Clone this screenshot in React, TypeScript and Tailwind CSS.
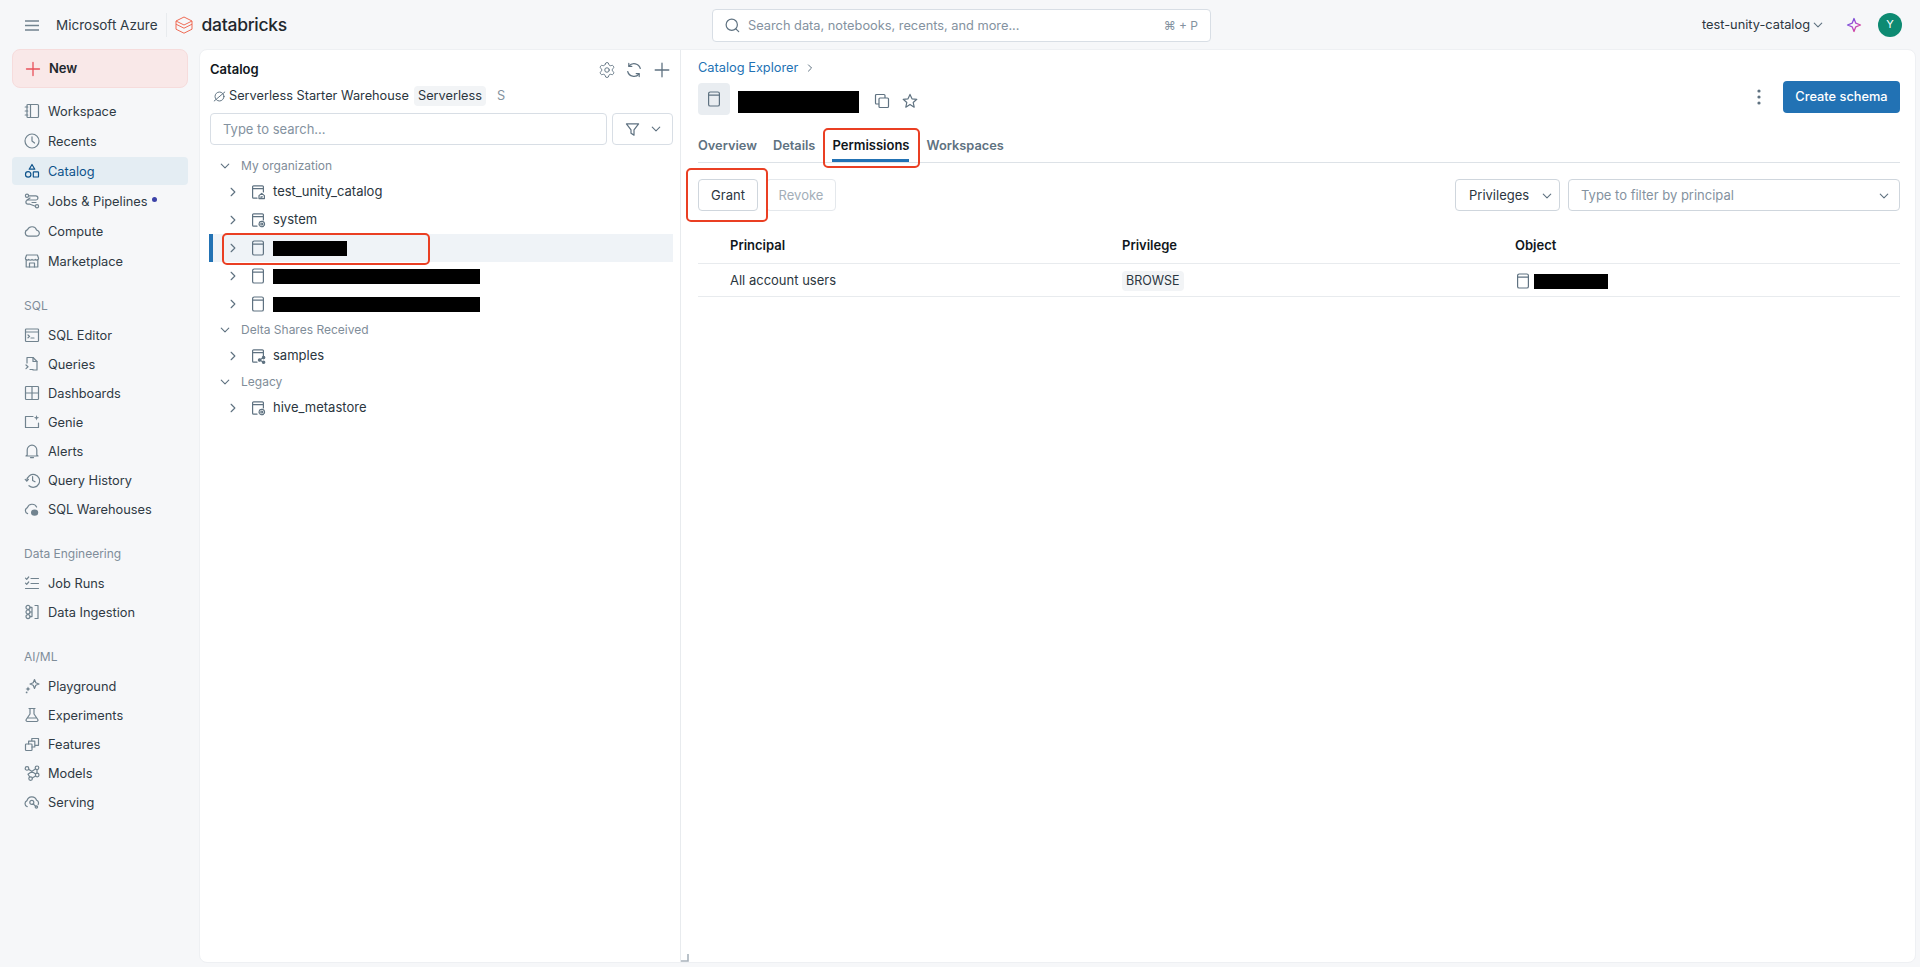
import React from "react";
import { Settings } from "lucide-react";

const S = ({ children, className = "w-4 h-4", sw = 1.2 }: { children: React.ReactNode; className?: string; sw?: number }) => (
  <svg viewBox="0 0 16 16" fill="none" stroke="currentColor" strokeWidth={sw} strokeLinecap="round" strokeLinejoin="round" className={className}>
    {children}
  </svg>
);

const navIcons: Record<string, React.ReactNode> = {
  Workspace: <><rect x="3" y="1.5" width="11.5" height="13" rx="1" /><path d="M6.5 1.5v13M1.2 4h2.6M1.2 8h2.6M1.2 12h2.6" /></>,
  Recents: <><circle cx="8" cy="8" r="7" /><path d="M8 3.8V8l2.6 2" /></>,
  Catalog: <><path d="M8 1.5l2.8 4.7H5.2z" /><circle cx="4.2" cy="11.4" r="2.7" /><rect x="9.3" y="8.8" width="5.2" height="5.2" rx=".6" /></>,
  "Jobs & Pipelines": <><circle cx="3" cy="2.8" r="1.6" /><circle cx="13" cy="13.2" r="1.6" /><path d="M4.6 2.8h7.2a2 2 0 0 1 0 4.2H4a2.1 2.1 0 0 0 0 4.2h2l5.4 2M6 5l-3 2M12 9.5H8" /></>,
  Compute: <path d="M4.4 13.2h7.6a3 3 0 0 0 .6-6A4.8 4.8 0 0 0 3.6 6.6a3.4 3.4 0 0 0 .8 6.6z" />,
  Marketplace: <><path d="M2.2 6.5V14h11.6V6.5" /><path d="M2.6 2h10.8l1.2 3.2a1.9 1.9 0 0 1-3.3 1.2A2.3 2.3 0 0 1 8 6.4a2.3 2.3 0 0 1-3.3 0 1.9 1.9 0 0 1-3.3-1.2zM5.5 14v-4h5v4" /></>,
  "SQL Editor": <><rect x="1.5" y="2" width="13" height="12.5" rx=".8" /><path d="M1.5 5h13M4 8l1.6 1.4L4 10.8M7 11h3" /></>,
  Queries: <><path d="M3 7V1.5h6l4 4V14H9" /><path d="M9 1.5v4h4M2 9l2 1.8L2 12.6M6 13.5h3" /></>,
  Dashboards: <><rect x="1.5" y="1.5" width="13" height="13" rx=".8" /><path d="M8 1.5v13M1.5 8h13" /></>,
  Genie: <><path d="M9 2.5H1.5v11h13V9" /><path d="M12.5 1l.7 2 2 .7-2 .7-.7 2-.7-2-2-.7 2-.7z" fill="currentColor" stroke="none" /></>,
  Alerts: <><path d="M3.2 12V7a4.8 4.8 0 0 1 9.6 0v5l1.2 1H2z" /><path d="M6.5 14.6h3" /></>,
  "Query History": <><path d="M1.2 7.4l1.6 1.6 1.6-1.6" /><path d="M2.8 8.6A6.4 6.4 0 1 1 5 13.7" /><path d="M8.6 4.6V8.4l2.4 1.4" /></>,
  "SQL Warehouses": <><path d="M3.6 12.6a3.2 3.2 0 0 1-.2-6A5 5 0 0 1 12.6 6" /><ellipse cx="10.6" cy="11.6" rx="3.6" ry="3.2" fill="currentColor" stroke="none" /></>,
  "Job Runs": <><path d="M1.5 3.2l1.2 1.2 2-2.4M1.5 8.2l1.2 1.2 2-2.4M7 3.5h7.5M7 8.5h7.5M1.5 13.5h13" /></>,
  "Data Ingestion": <><path d="M11 1.5h3v13h-3" /><circle cx="4" cy="3.4" r="2" /><circle cx="4" cy="8" r="2" /><circle cx="4" cy="12.6" r="2" /><path d="M6 3.4h2v9.2H6M8 8H6" /></>,
  Playground: <><path d="M10.5 1.5l1.3 3.2L15 6l-3.2 1.3L10.5 10.5 9.2 7.3 6 6l3.2-1.3z" /><path d="M4 8.5l.8 1.7 1.7.8-1.7.8L4 13.5l-.8-1.7-1.7-.8 1.7-.8z" fill="currentColor" stroke="none" /><circle cx="2.6" cy="14.4" r=".9" fill="currentColor" stroke="none" /></>,
  Experiments: <><path d="M5 1.5h6M6 1.5v5.5L2.2 12.5a1.3 1.3 0 0 0 1.1 2h9.4a1.3 1.3 0 0 0 1.1-2L10 7V1.5M3.6 11h8.8" /></>,
  Features: <><rect x="1.5" y="8" width="6.5" height="6.5" rx=".8" /><path d="M4.6 8V5.2h6.2V11H8M7.8 5.2V2.5h6.7v6.8h-3.7" /></>,
  Models: <><circle cx="3" cy="3.4" r="1.8" /><circle cx="13" cy="2.8" r="1.8" /><circle cx="13.2" cy="10" r="1.8" /><circle cx="6.6" cy="13.6" r="1.8" /><path d="M4.6 4.2l7 4.8M11.6 3.8L4 9.2l1.8 2.8M11.6 11l-3.4 2M13 4.6v3.6" /></>,
  Serving: <><path d="M3.2 12.6a3.2 3.2 0 0 1-.2-6 5 5 0 0 1 9.6-.4 3.2 3.2 0 0 1 1.6 4.4" /><circle cx="7.8" cy="8.4" r="2" /><path d="M9.2 9.8l3 3" /><circle cx="12.4" cy="13" r="1.2" /></>,
};

const NavRow = ({ label, active, dot }: { label: string; active?: boolean; dot?: boolean }) => (
  <div className={`h-7 mx-3 pl-3 flex items-center gap-2 rounded ${active ? "bg-[#e4edf3] text-[#0e538b]" : "text-[#2f3a44]"}`}>
    <span className={active ? "text-[#0e538b]" : "text-[#71838f]"}>
      <S>{navIcons[label]}</S>
    </span>
    <span className="text-[12.8px] pt-px">{label}</span>
    {dot && <span className="w-[5px] h-[5px] rounded-full bg-[#3c42a8] -ml-1 -mt-[3px]" />}
  </div>
);

const NavHead = ({ label }: { label: string }) => (
  <div className="mt-[21px] mb-[5px] h-5 pl-6 flex items-center text-[12px] text-[#7f8d99]">{label}</div>
);

const ChevR = () => <S className="w-3 h-3 text-[#5f7281]" sw={1.5}><path d="M5.5 3l5 5-5 5" /></S>;
const ChevD = ({ c = "text-[#5f7281]" }: { c?: string }) => <S className={`w-3 h-3 ${c}`} sw={1.5}><path d="M3 5.5l5 5 5-5" /></S>;

const Cat = ({ badge }: { badge?: "home" | "gear" | "share" }) => (
  <svg viewBox="0 0 16 16" fill="none" stroke="currentColor" strokeWidth="1.2" strokeLinecap="round" strokeLinejoin="round" className="w-4 h-4 text-[#5f7281]">
    {badge ? (
      <>
        <path d="M13.4 8V2.8a1 1 0 0 0-1-1H3.6a1 1 0 0 0-1 1v10.4a1 1 0 0 0 1 1H7M2.6 4.6h10.8" />
        {badge === "home" && <path d="M9 14.6v-3l2.7-2.2 2.7 2.2v3zM11 14.6v-1.8h1.4" />}
        {badge === "gear" && <><circle cx="11.8" cy="12" r="1" /><circle cx="11.8" cy="12" r="2.7" strokeDasharray="1.4 1" strokeWidth="1.3" /></>}
        {badge === "share" && <><circle cx="9.6" cy="12" r="1.2" fill="currentColor" /><circle cx="13.6" cy="9.6" r="1.2" fill="currentColor" /><circle cx="13.6" cy="14.2" r="1.2" fill="currentColor" /><path d="M9.6 12l4-2.4M9.6 12l4 2.2" /></>}
      </>
    ) : (
      <>
        <rect x="2.6" y="1" width="10.8" height="14" rx="1.6" />
        <path d="M2.6 4.2h10.8" />
      </>
    )}
  </svg>
);

const Section = ({ label }: { label: string }) => (
  <div className="h-6 pl-[10px] flex items-center gap-[10px] text-[12px] text-[#7f8d99]">
    <ChevD />
    <span>{label}</span>
  </div>
);

const TreeRow = ({ label, badge, redact, active }: { label?: string; badge?: "home" | "gear" | "share"; redact?: string; active?: boolean }) => (
  <div className={`h-7 pl-[14px] flex items-center border-l-4 ${active ? "border-[#2272b4] bg-[#eff3f7]" : "border-transparent"}`}>
    <ChevR />
    <span className="ml-[11px] mr-[7px]"><Cat badge={badge} /></span>
    {label ? <span className="text-[13px] text-[#2b3640]">{label}</span> : <div className={`h-[15px] bg-black ${redact}`} />}
  </div>
);

const Tab = ({ label, active }: { label: string; active?: boolean }) => (
  <div className={`h-8 pt-[3px] flex items-center border-b-[3px] font-semibold ${active ? "mx-px text-[13px] border-[#2272b4] text-[#11171c]" : "text-[12.8px] border-transparent text-[#5f7281]"}`}>
    {label}
  </div>
);

const RedBox = ({ className }: { className: string }) => (
  <div className={`absolute border-[2.5px] border-[#ea3f23] rounded-[5px] pointer-events-none ${className}`} />
);

export default function App() {
  return (
    <div className="relative w-full h-[967px] overflow-hidden bg-[#f6f7f9] font-['Inter','Noto_Sans',sans-serif] flex flex-col text-[#11171c]">
      {/* top bar */}
      <header className="h-[49px] shrink-0 flex items-center">
        <div className="w-[712px] shrink-0 flex items-center pl-[25px] pt-px">
          <svg viewBox="0 0 14 11" className="w-[14px] h-[11px] text-[#71838f]" fill="none" stroke="currentColor" strokeWidth="1.3"><path d="M0 1h14M0 5.5h14M0 10h14" /></svg>
          <span className="ml-[17px] text-[13.5px] text-[#2f3a44]">Microsoft Azure</span>
          <span className="ml-2 w-px h-6 bg-[#e8ebee]" />
          <svg viewBox="0 0 18 18" className="ml-2 w-[18px] h-[18px] text-[#ef6b55]" fill="none" stroke="currentColor" strokeWidth="1" strokeLinejoin="round">
            <path d="M9 1L17 5 9 9 1 5z" />
            <path d="M1 8.2l8 4 8-4" />
            <path d="M1 5v8.2l8 4 8-4V5" />
          </svg>
          <span className="ml-[9px] text-[17.5px] font-medium tracking-[-0.3px] text-[#1f272d]">databricks</span>
        </div>
        <div className="w-[499px] h-[33px] mt-[2px] shrink-0 bg-white border border-[#d8dee5] rounded flex items-center pl-3 pr-3">
          <S className="w-[15px] h-[15px] text-[#5f7281]" sw={1.3}><circle cx="7.2" cy="7.2" r="6" /><path d="M11.6 11.6l3 3" /></S>
          <span className="ml-2 text-[12.8px] text-[#8492a0]">Search data, notebooks, recents, and more...</span>
          <span className="ml-auto text-[12px] text-[#8492a0]">⌘ + P</span>
        </div>
        <div className="flex-1 flex items-center justify-end pr-[18px]">
          <span className="text-[12.8px] text-[#2b3640]">test-unity-catalog</span>
          <span className="ml-[2px]"><ChevD /></span>
          <svg viewBox="0 0 16 16" className="ml-[22px] w-[16px] h-[16px]" fill="none" strokeWidth="1.3" strokeLinejoin="round">
            <defs>
              <linearGradient id="sp" x1="0" y1="0" x2="1" y2="1">
                <stop offset="0" stopColor="#4a57e0" />
                <stop offset="0.5" stopColor="#b04ad0" />
                <stop offset="1" stopColor="#f0447a" />
              </linearGradient>
            </defs>
            <path d="M8 1.5l1.8 4.7 4.7 1.8-4.7 1.8L8 14.5l-1.8-4.7L1.5 8l4.7-1.8z" stroke="url(#sp)" />
          </svg>
          <div className="ml-[16px] w-6 h-6 rounded-full bg-[#0d8a72] flex items-center justify-center text-[11px] text-white">Y</div>
        </div>
      </header>

      <div className="flex-1 flex min-h-0 pb-[4px] pr-[4px]">
        {/* side navigation */}
        <aside className="w-[200px] shrink-0 flex flex-col">
          <div className="mx-3 h-[39px] rounded-lg bg-[#f9e8e8] border border-[#f6dcdc] pl-3 flex items-center gap-2">
            <S className="w-4 h-4 text-[#e8505a]" sw={1.3}><path d="M8 1.5v13M1.5 8h13" /></S>
            <span className="text-[13px] font-semibold text-[#1f272d]">New</span>
          </div>
          <div className="mt-[9px] flex flex-col gap-0.5">
            <NavRow label="Workspace" />
            <NavRow label="Recents" />
            <NavRow label="Catalog" active />
            <NavRow label="Jobs & Pipelines" dot />
            <NavRow label="Compute" />
            <NavRow label="Marketplace" />
          </div>
          <NavHead label="SQL" />
          <div className="flex flex-col gap-px">
            <NavRow label="SQL Editor" />
            <NavRow label="Queries" />
            <NavRow label="Dashboards" />
            <NavRow label="Genie" />
            <NavRow label="Alerts" />
            <NavRow label="Query History" />
            <NavRow label="SQL Warehouses" />
          </div>
          <NavHead label="Data Engineering" />
          <div className="flex flex-col gap-px">
            <NavRow label="Job Runs" />
            <NavRow label="Data Ingestion" />
          </div>
          <NavHead label="AI/ML" />
          <div className="flex flex-col gap-px">
            <NavRow label="Playground" />
            <NavRow label="Experiments" />
            <NavRow label="Features" />
            <NavRow label="Models" />
            <NavRow label="Serving" />
          </div>
        </aside>

        {/* main card */}
        <main className="relative flex-1 min-w-0 bg-white rounded-lg border border-[#eef0f3] flex -ml-px">
          {/* catalog panel */}
          <section className="w-[481px] shrink-0 border-r border-[#e8ebee] flex flex-col">
            <div className="mt-[8px] h-6 pl-[10px] pr-[10px] flex items-center">
              <span className="text-[13px] font-semibold text-[#11171c]">Catalog</span>
              <div className="ml-auto flex items-center gap-[10px] text-[#5f7281]">
                <Settings size={18} strokeWidth={1.25} />
                <S><path d="M14.3 6.5A6.5 6.5 0 0 0 3 4M1.7 9.5A6.5 6.5 0 0 0 13 12" /><path d="M2.8 1.4V4.4h3M13.2 14.6V11.6h-3" /></S>
                <span className="ml-[2px]"><S sw={1.3}><path d="M8 1.2v13.6M1.2 8h13.6" /></S></span>
              </div>
            </div>
            <div className="mt-[2px] h-6 pl-[13px] flex items-center text-[12.75px] text-[#2b3640]">
              <S className="w-[13px] h-[13px] text-[#5f7281]"><circle cx="8" cy="8" r="5.5" /><path d="M1.5 13.5l13-11" /></S>
              <span className="ml-[3px]">Serverless Starter Warehouse</span>
              <span className="ml-[5px] h-5 px-1 flex items-center rounded bg-[#f2f4f6]">Serverless</span>
              <span className="ml-[11px] text-[#8492a0]">S</span>
            </div>
            <div className="mt-[5px] pl-[10px] pr-[7px] flex gap-[5px]">
              <div className="flex-1 h-8 border border-[#d8dee5] rounded pl-3 pt-px flex items-center text-[13px] text-[#8492a0]">Type to search...</div>
              <div className="w-[61px] h-8 border border-[#d8dee5] rounded flex items-center pl-3 gap-[10px] text-[#5f7281]">
                <S className="w-[15px] h-[15px]" sw={1.3}><path d="M1.5 2h13L9.6 8.4V14L6.4 12V8.4z" /></S>
                <ChevD />
              </div>
            </div>
            <div className="mt-[9px] pl-[9px] pr-[7px] flex flex-col">
              <Section label="My organization" />
              <TreeRow label="test_unity_catalog" badge="home" />
              <TreeRow label="system" badge="gear" />
              <TreeRow redact="w-[74px]" active />
              <TreeRow redact="w-[207px]" />
              <TreeRow redact="w-[207px]" />
              <Section label="Delta Shares Received" />
              <TreeRow label="samples" badge="share" />
              <Section label="Legacy" />
              <TreeRow label="hive_metastore" badge="gear" />
            </div>
          </section>

          {/* detail panel */}
          <section className="flex-1 min-w-0 pl-[17px] pr-[15px] flex flex-col">
            <div className="mt-[8px] h-5 flex items-center gap-[7px] text-[12.8px] text-[#2272b4]">
              <span>Catalog Explorer</span>
              <span className="text-[#5f7281]"><S className="w-[10px] h-[10px]" sw={1.6}><path d="M5.5 3l5 5-5 5" /></S></span>
            </div>
            <div className="mt-[3px] h-[34px] flex items-start">
              <div className="mt-[2px] flex items-center">
                <div className="w-8 h-8 rounded bg-[#e9edf1] flex items-center justify-center"><Cat /></div>
                <div className="ml-2 w-[121px] h-[22px] bg-black self-end mb-[2px]" />
                <span className="ml-[15px] mt-[4px] text-[#5f7281]"><S><rect x="1.5" y="1.5" width="9.5" height="9.5" rx="1" /><rect x="5" y="5" width="9.5" height="9.5" rx="1" fill="white" /></S></span>
                <span className="ml-3 mt-[4px] text-[#5f7281]"><S><path d="M8 1.4l2 4.4 4.8.5-3.6 3.2 1 4.7L8 11.4l-4.2 2.8 1-4.7L1.2 6.3 6 5.8z" /></S></span>
              </div>
              <div className="ml-auto flex items-center">
                <svg viewBox="0 0 4 16" className="w-1 h-4 mr-[22px] text-[#5f7281]" fill="currentColor"><circle cx="2" cy="2" r="1.6" /><circle cx="2" cy="8" r="1.6" /><circle cx="2" cy="14" r="1.6" /></svg>
                <div className="w-[117px] h-8 rounded bg-[#2272b4] flex items-center justify-center text-[12.8px] font-medium text-white">Create schema</div>
              </div>
            </div>
            <div className="mt-[15px] flex gap-4 border-b border-[#dde2e7]">
              <Tab label="Overview" />
              <Tab label="Details" />
              <Tab label="Permissions" active />
              <Tab label="Workspaces" />
            </div>
            <div className="mt-4 flex items-center">
              <div className="w-[60px] h-8 pt-px border border-[#cfd6dd] rounded flex items-center justify-center text-[13px] text-[#2b3640]">Grant</div>
              <div className="ml-2 w-[70px] h-8 pt-px border border-[#e4e8ec] rounded flex items-center justify-center text-[13px] text-[#a3aeb8]">Revoke</div>
              <div className="ml-auto w-[105px] h-8 pt-px border border-[#cfd6dd] rounded flex items-center pl-[13px] text-[13px] text-[#2b3640]">
                <span>Privileges</span>
                <span className="ml-3"><ChevD /></span>
              </div>
              <div className="ml-2 w-[332px] h-8 pt-px border border-[#cfd6dd] rounded flex items-center pl-3 pr-[9px] text-[13px] text-[#8492a0]">
                <span>Type to filter by principal</span>
                <span className="ml-auto"><ChevD /></span>
              </div>
            </div>
            <div className="mt-[18px] h-[35px] grid grid-cols-[424px_393px_1fr] items-center border-b border-[#e8ebee] text-[13px] font-semibold text-[#11171c]">
              <span className="pl-8">Principal</span>
              <span>Privilege</span>
              <span>Object</span>
            </div>
            <div className="h-[33px] pt-[2px] grid grid-cols-[424px_393px_1fr] items-center border-b border-[#e8ebee] text-[13px] text-[#2b3640]">
              <span className="pl-8">All account users</span>
              <span><span className="inline-flex h-5 items-center px-1 rounded bg-[#f2f4f6] text-[12.5px]">BROWSE</span></span>
              <span className="flex items-center gap-[3px]"><Cat /><span className="w-[74px] h-[15px] bg-black" /></span>
            </div>
          </section>

          <svg viewBox="0 0 8 8" className="absolute left-[481px] bottom-0 w-2 h-2 text-[#a9b3bc]" fill="none" stroke="currentColor" strokeWidth="1.6"><path d="M0 7h7V0" /></svg>
        </main>
      </div>

      {/* annotation boxes over the screenshot */}
      <RedBox className="left-[222px] top-[233px] w-[208px] h-[32px]" />
      <RedBox className="left-[823px] top-[128px] w-[97px] h-[40px]" />
      <RedBox className="left-[686px] top-[168px] w-[82px] h-[54px]" />
    </div>
  );
}
